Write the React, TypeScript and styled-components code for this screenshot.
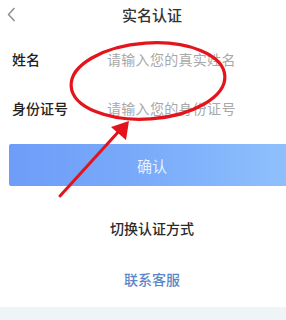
import React from "react";
import styled, { createGlobalStyle } from "styled-components";

const GlobalStyle = createGlobalStyle`
  html, body {
    margin: 0;
    padding: 0;
    background: #ffffff;
    overflow: hidden;
  }
  #root {
    width: 286px;
    height: 320px;
    overflow: hidden;
  }
`;

const fields = [
  { label: "姓名", placeholder: "请输入您的真实姓名" },
  { label: "身份证号", placeholder: "请输入您的身份证号" },
];

const App: React.FunctionComponent<{}> = () => {
  return (
    <>
      <GlobalStyle />
      <PageStyled>
        <HeaderStyled>
          <BackStyled>
            <svg width="9" height="15" viewBox="0 0 9 15">
              <path d="M7.5 1 L1.5 7.5 L7.5 14" fill="none" stroke="#8a8a8a" strokeWidth="1.4" />
            </svg>
          </BackStyled>
          <TitleStyled>实名认证</TitleStyled>
        </HeaderStyled>

        <FormStyled>
          {fields.map(f => (
            <RowStyled key={f.label}>
              <LabelStyled>{f.label}</LabelStyled>
              <InputStyled placeholder={f.placeholder} />
            </RowStyled>
          ))}
        </FormStyled>

        <ButtonStyled>确认</ButtonStyled>

        <SwitchStyled>切换认证方式</SwitchStyled>
        <ContactStyled>联系客服</ContactStyled>

        <FooterStyled />

        <MarkupStyled width="304" height="320" viewBox="0 0 304 320">
          <ellipse
            cx="148"
            cy="81"
            rx="77"
            ry="38"
            transform="rotate(-4 148 81)"
            fill="none"
            stroke="#e3141b"
            strokeWidth="3.2"
          />
          <line x1="60" y1="196" x2="120" y2="130" stroke="#e3141b" strokeWidth="3" strokeLinecap="round" />
          <polygon points="129,121 126,140 111,127" fill="#e3141b" />
        </MarkupStyled>
      </PageStyled>
    </>
  );
};

const PageStyled = styled.div`
  position: relative;
  width: 304px;
  height: 320px;
  display: flex;
  flex-direction: column;
  font-family: "Noto Sans CJK SC", "Noto Sans", sans-serif;
  background: #ffffff;
`;

const HeaderStyled = styled.div`
  position: relative;
  height: 30px;
  display: flex;
  align-items: center;
  justify-content: center;
`;

const BackStyled = styled.div`
  position: absolute;
  left: 7px;
  top: 7px;
  display: flex;
`;

const TitleStyled = styled.div`
  font-size: 15px;
  font-weight: 500;
  color: #333333;
  line-height: 30px;
`;

const FormStyled = styled.div`
  display: flex;
  flex-direction: column;
  padding-top: 4px;
`;

const RowStyled = styled.div`
  height: 49px;
  display: flex;
  align-items: center;
  padding-left: 12px;
`;

const LabelStyled = styled.div`
  width: 95px;
  font-size: 14px;
  font-weight: 500;
  color: #222222;
`;

const InputStyled = styled.input`
  flex: 1;
  border: none;
  outline: none;
  padding: 0;
  font-family: inherit;
  font-size: 14px;
  letter-spacing: 0.3px;
  color: #333333;
  background: transparent;
  &::placeholder {
    color: #a8a8a8;
  }
`;

const ButtonStyled = styled.div`
  margin: 12px 9px 0;
  height: 42px;
  border-radius: 2px;
  background: linear-gradient(90deg, #6d9df8 0%, #7aacfa 50%, #90c1fd 100%);
  color: rgba(255, 255, 255, 0.85);
  font-size: 15px;
  display: flex;
  align-items: center;
  justify-content: center;
`;

const SwitchStyled = styled.div`
  margin-top: 32px;
  text-align: center;
  font-size: 14px;
  font-weight: 500;
  color: #2a2a2a;
  line-height: 20px;
`;

const ContactStyled = styled.div`
  margin-top: 31px;
  text-align: center;
  font-size: 14px;
  font-weight: 500;
  color: #5a86c6;
  line-height: 20px;
`;

const FooterStyled = styled.div`
  margin-top: 18px;
  flex: 1;
  background: #eff5f6;
`;

const MarkupStyled = styled.svg`
  position: absolute;
  left: 0;
  top: 0;
  pointer-events: none;
`;

export default App;
